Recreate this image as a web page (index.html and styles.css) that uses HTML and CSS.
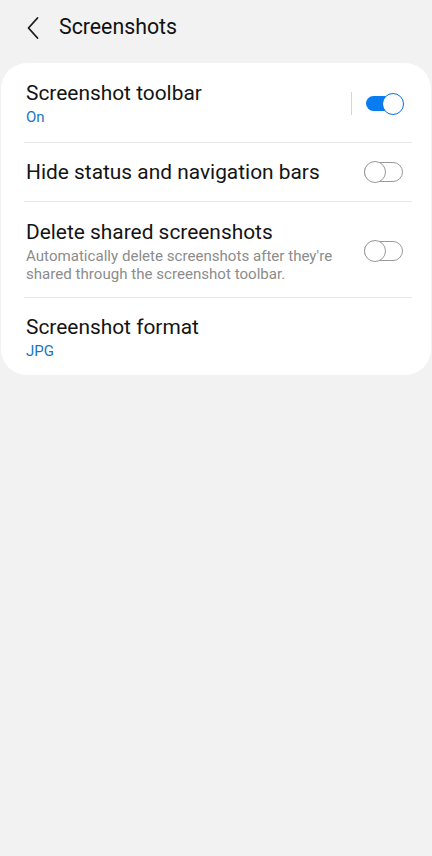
FILE: index.html
```html
<!DOCTYPE html>
<html lang="en">
<head>
<meta charset="utf-8">
<title>Screenshots</title>
<link rel="stylesheet" href="styles.css">
</head>
<body>
<header class="appbar">
  <button class="back" aria-label="Back">
    <svg width="14" height="24" viewBox="0 0 14 24"><path d="M11.5 2 L2.5 12 L11.5 22" fill="none" stroke="#1a1a1a" stroke-width="1.8" stroke-linecap="round" stroke-linejoin="round"/></svg>
  </button>
  <h1 class="title">Screenshots</h1>
</header>
<main class="card">
  <div class="row row-first">
    <div class="text">
      <div class="label">Screenshot toolbar</div>
      <div class="value">On</div>
    </div>
    <div class="sep"></div>
    <div class="switch on"><span class="thumb"></span></div>
  </div>
  <div class="row row-plain">
    <div class="text">
      <div class="label">Hide status and navigation bars</div>
    </div>
    <div class="switch"><span class="thumb"></span></div>
  </div>
  <div class="row row-desc">
    <div class="text">
      <div class="label">Delete shared screenshots</div>
      <div class="desc">Automatically delete screenshots after they're shared through the screenshot toolbar.</div>
    </div>
    <div class="switch"><span class="thumb"></span></div>
  </div>
  <div class="row row-last">
    <div class="text">
      <div class="label">Screenshot format</div>
      <div class="value">JPG</div>
    </div>
  </div>
</main>
</body>
</html>
```
FILE: styles.css
```css
html, body {
  margin: 0;
  padding: 0;
}
body {
  background: #f2f2f2;
  font-family: Roboto, "Noto Sans", "Liberation Sans", sans-serif;
  color: #111;
  width: 432px;
  height: 856px;
}
.appbar {
  display: flex;
  align-items: center;
  height: 63px;
  box-sizing: border-box;
  padding: 0 0 10px 26px;
}
.back {
  border: 0;
  background: none;
  padding: 0;
  width: 14px;
  height: 24px;
  display: flex;
  margin-top: 2px;
}
.title {
  margin: 0 0 0 19px;
  font-size: 21.3px;
  font-weight: 400;
  color: #111;
}
.card {
  background: #fff;
  margin: 0 1px;
  border-radius: 26px;
  padding: 0 19px 0 23px;
  display: flex;
  flex-direction: column;
}
.row {
  display: flex;
  align-items: center;
  padding: 0 9px 0 2px;
  border-top: 1px solid #e6e6e6;
}
.row-first {
  border-top: 0;
  height: 79px;
  padding-top: 2px;
  box-sizing: border-box;
}
.row-plain { height: 58px; }
.row-desc { height: 96px; padding-top: 3px; box-sizing: border-box; }
.row-last { height: 78px; padding-top: 3px; box-sizing: border-box; }
.text {
  flex: 1;
  min-width: 0;
}
.label {
  font-size: 20.9px;
  line-height: 25px;
  color: #141414;
}
.value {
  font-size: 15px;
  line-height: 20px;
  color: #1a76c4;
  margin-top: 1px;
}
.desc {
  font-size: 15.1px;
  line-height: 18px;
  color: #8c8c8c;
  margin-top: 2px;
  padding-right: 20px;
}
.sep {
  width: 1px;
  height: 23px;
  background: #d6d6d6;
  margin-right: 14px;
}
.switch {
  position: relative;
  width: 39px;
  height: 20px;
  box-sizing: border-box;
  border: 1.5px solid #9a9a9a;
  border-radius: 10px;
  flex: none;
}
.switch .thumb {
  position: absolute;
  top: -2px;
  left: -1.5px;
  width: 22px;
  height: 22px;
  box-sizing: border-box;
  border: 1.5px solid #9a9a9a;
  border-radius: 50%;
  background: #fff;
}
.switch.on {
  background: #0a7cf2;
  border: 0;
  height: 15px;
  width: 37px;
  border-radius: 8px;
}
.switch.on .thumb {
  top: -3.5px;
  left: auto;
  right: -1px;
  border: 1.5px solid #0a6fd6;
}
```
